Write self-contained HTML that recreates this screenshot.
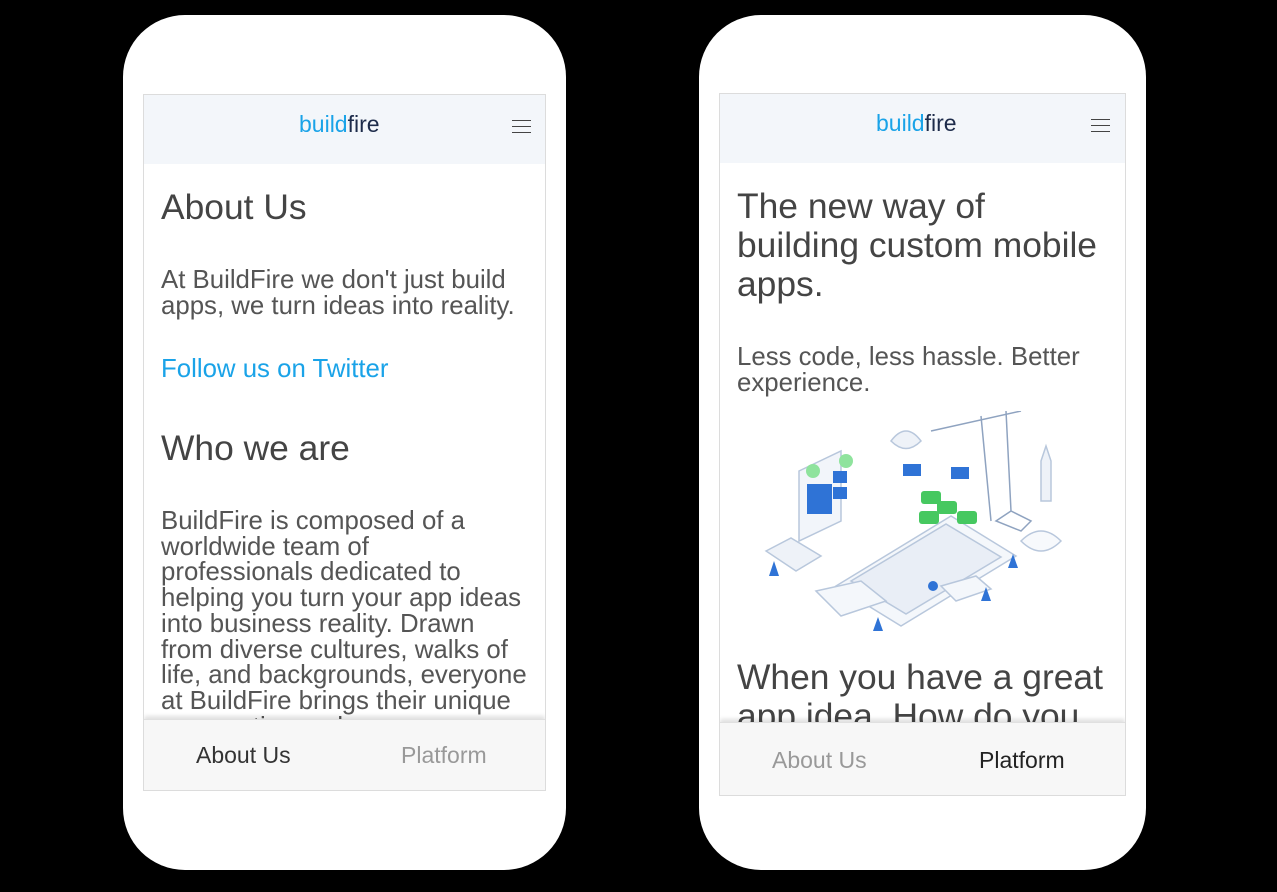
<!DOCTYPE html>
<html><head><meta charset="utf-8"><style>
*{margin:0;padding:0;box-sizing:border-box}
body{width:1277px;height:892px;background:#000;position:relative;overflow:hidden;font-family:"Liberation Sans",Arial,sans-serif}
.phone{position:absolute;background:#fff;border-radius:62px}
.screen{position:absolute;background:#fff;border:1px solid #dcdcdc;overflow:hidden}
.hdr{position:absolute;left:0;right:0;top:0;height:69px;background:#f3f6fa}
.logo{position:absolute;top:16px;font-size:23px;font-family:"Liberation Sans",sans-serif}
.logo .b{color:#1aa3e8}.logo .f{color:#1d2b4a}
.ham{position:absolute;width:19px;height:13px;border-top:1.5px solid #444;border-bottom:1.5px solid #444}
.ham:after{content:"";position:absolute;left:0;right:0;top:4.5px;border-top:1.5px solid #444}
.t{position:absolute;color:#444;white-space:nowrap}
.h{font-size:35.4px;line-height:39px}
.p{font-size:25.8px;line-height:25.7px;color:#555}
.tab{position:absolute;left:0;right:0;bottom:0;background:#f7f7f7;box-shadow:0 -3px 4px rgba(0,0,0,0.12);border-top:1px solid #e0e0e0}
.tab span{position:absolute;font-size:23px;top:22px}
</style></head><body>
<div class="phone" style="left:123px;top:15px;width:443px;height:855px"></div>
<div class="phone" style="left:699px;top:15px;width:447px;height:855px"></div>

<div class="screen" style="left:143px;top:94px;width:403px;height:697px">
 <div class="hdr"><div class="logo" style="left:155px"><span class="b">build</span><span class="f">fire</span></div><div class="ham" style="left:368px;top:25px"></div></div>
 <div class="t h" style="left:17px;top:93px">About Us</div>
 <div class="t p" style="left:17px;top:173px">At BuildFire we don't just build<br>apps, we turn ideas into reality.</div>
 <div class="t p" style="left:17px;top:262px;color:#1aa3e8">Follow us on Twitter</div>
 <div class="t h" style="left:17px;top:334px">Who we are</div>
 <div class="t p" style="left:17px;top:414px">BuildFire is composed of a<br>worldwide team of<br>professionals dedicated to<br>helping you turn your app ideas<br>into business reality. Drawn<br>from diverse cultures, walks of<br>life, and backgrounds, everyone<br>at BuildFire brings their unique<br>perspective and</div>
 <div class="tab" style="height:71px"><span style="left:52px;color:#333">About Us</span><span style="left:257px;color:#999">Platform</span></div>
</div>

<div class="screen" style="left:719px;top:93px;width:407px;height:703px">
 <div class="hdr"><div class="logo" style="left:156px"><span class="b">build</span><span class="f">fire</span></div><div class="ham" style="left:371px;top:25px"></div></div>
 <div class="t h" style="left:17px;top:93px">The new way of<br>building custom mobile<br>apps.</div>
 <div class="t p" style="left:17px;top:251px">Less code, less hassle. Better<br>experience.</div>
 <svg style="position:absolute;left:21px;top:317px" width="370" height="230" viewBox="0 0 370 230">
  <g fill="none" stroke="#b8c7dc" stroke-width="1.5">
   <path d="M95 175 L210 105 L275 145 L160 215 Z" fill="#f4f7fb"/>
   <path d="M110 170 L205 113 L260 146 L165 203 Z" fill="#e9eef6"/>
   <path d="M58 60 L100 40 L100 110 L58 130 Z" fill="#f2f5fa"/>
   <path d="M25 140 L50 127 L80 145 L55 160 Z" fill="#eef2f8"/>
   <path d="M190 20 L280 0 M240 5 L250 110 M265 0 L270 100 M270 100 L255 110 L280 120 L290 110 Z" stroke="#8fa3c0"/>
   <path d="M75 180 L120 170 L145 190 L100 205 Z" fill="#f4f7fb"/>
   <path d="M200 175 L235 165 L250 178 L215 190 Z" fill="#f4f7fb"/>
   <path d="M150 30 Q165 10 180 30 Q165 45 150 30 Z" fill="#eef2f8"/>
   <path d="M300 50 L305 35 L310 50 L310 90 L300 90 Z" fill="#eef2f8"/>
   <path d="M280 130 Q300 110 320 130 Q300 150 280 130 Z" fill="#f7f9fc"/>
  </g>
  <rect x="66" y="73" width="25" height="30" fill="#2f73d6"/>
  <rect x="92" y="60" width="14" height="12" fill="#2f73d6"/>
  <rect x="92" y="76" width="14" height="12" fill="#2f73d6"/>
  <g fill="#46c860"><rect x="180" y="80" width="20" height="13" rx="3"/><rect x="196" y="90" width="20" height="13" rx="3"/><rect x="178" y="100" width="20" height="13" rx="3"/><rect x="216" y="100" width="20" height="13" rx="3"/></g>
  <g fill="#2f73d6"><rect x="162" y="53" width="18" height="12"/><rect x="210" y="56" width="18" height="12"/><path d="M28 165 L33 150 L38 165 Z"/><path d="M240 190 L245 176 L250 190 Z"/><path d="M132 220 L137 206 L142 220 Z"/><path d="M267 157 L272 143 L277 157 Z"/><circle cx="192" cy="175" r="5"/></g>
  <g fill="#8fe39d"><circle cx="72" cy="60" r="7"/><circle cx="105" cy="50" r="7"/></g>
 </svg>
 <div class="t h" style="left:17px;top:564px">When you have a great<br>app idea. How do you</div>
 <div class="tab" style="height:73px"><span style="left:52px;color:#999;top:24px">About Us</span><span style="left:259px;color:#222;top:24px">Platform</span></div>
</div>
</body></html>
